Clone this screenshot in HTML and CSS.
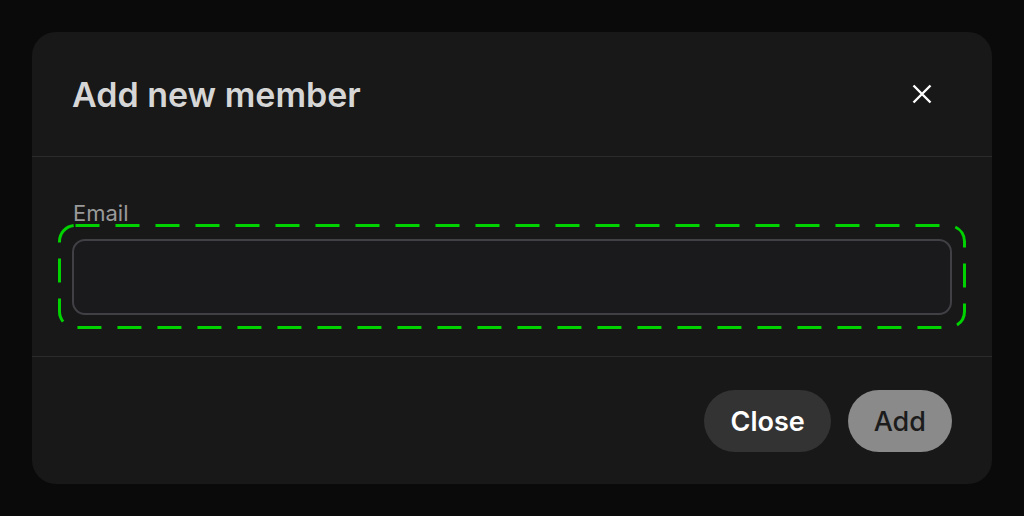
FILE: index.html
```html
<!DOCTYPE html>
<html lang="en">
<head>
<meta charset="utf-8">
<title>Add new member</title>
<link rel="stylesheet" href="styles.css">
</head>
<body>
<div class="backdrop">
  <div class="modal" role="dialog" aria-labelledby="modal-title">
    <header class="modal-header">
      <h2 id="modal-title" class="modal-title">Add new member</h2>
      <button class="icon-btn" aria-label="Close">
        <svg width="24" height="24" viewBox="0 0 24 24" aria-hidden="true">
          <path d="M3.5 3.5 L20.5 20.5 M20.5 3.5 L3.5 20.5" stroke="#ffffff" stroke-width="2.4" fill="none"/>
        </svg>
      </button>
    </header>
    <section class="modal-body">
      <label class="field-label" for="email">Email</label>
      <div class="field">
        <input id="email" class="field-input" type="email">
        <svg class="focus-ring" width="908" height="105" viewBox="0 0 908 105" aria-hidden="true">
          <rect x="1.5" y="1.5" width="905" height="102" rx="16" ry="16" fill="none" stroke="#00d200" stroke-width="3" stroke-dasharray="24 16"/>
        </svg>
      </div>
    </section>
    <footer class="modal-footer">
      <button class="btn btn-secondary">Close</button>
      <button class="btn btn-primary">Add</button>
    </footer>
  </div>
</div>
</body>
</html>
```

FILE: styles.css
```css
* { box-sizing: border-box; }

html, body {
  margin: 0;
  padding: 0;
  background: #0a0a0a;
  font-family: Inter, "Noto Sans", "Liberation Sans", sans-serif;
}

.backdrop {
  width: 1024px;
  height: 516px;
  padding: 32px;
}

.modal {
  width: 960px;
  height: 452px;
  background: #181818;
  border-radius: 24px;
  display: flex;
  flex-direction: column;
}

.modal-header {
  height: 125px;
  display: flex;
  align-items: center;
  justify-content: space-between;
  padding: 0 48px 0 40px;
  border-bottom: 1px solid #2b2b2b;
}

.modal-title {
  margin: 0;
  font-size: 34px;
  font-weight: 600;
  color: #d6d6d6;
  letter-spacing: 0;
}

.icon-btn {
  width: 44px;
  height: 44px;
  padding: 0;
  border: 0;
  background: transparent;
  display: flex;
  align-items: center;
  justify-content: center;
}

.modal-body {
  height: 200px;
  padding: 40px 40px 0;
  display: flex;
  flex-direction: column;
  gap: 9px;
  border-bottom: 1px solid #2b2b2b;
}

.field-label {
  font-size: 22px;
  line-height: 33px;
  color: #9a9a9a;
  padding-left: 1px;
}

.field {
  position: relative;
  height: 76px;
}

.field-input {
  width: 100%;
  height: 76px;
  background: #1a1a1d;
  border: 2px solid #404045;
  border-radius: 13px;
  outline: none;
}

.focus-ring {
  position: absolute;
  left: -14px;
  top: -15px;
  pointer-events: none;
}

.modal-footer {
  flex: 1;
  display: flex;
  align-items: center;
  justify-content: flex-end;
  gap: 17px;
  padding: 0 40px;
}

.btn {
  height: 62px;
  padding: 2px 26px 0;
  border: 0;
  border-radius: 31px;
  font-family: Inter, "Noto Sans", "Liberation Sans", sans-serif;
  font-size: 27px;
  font-weight: 600;
}

.btn-secondary {
  background: #333333;
  color: #ffffff;
}

.btn-primary {
  background: #8a8a8a;
  color: #1c1c1c;
  font-weight: 500;
}
```
